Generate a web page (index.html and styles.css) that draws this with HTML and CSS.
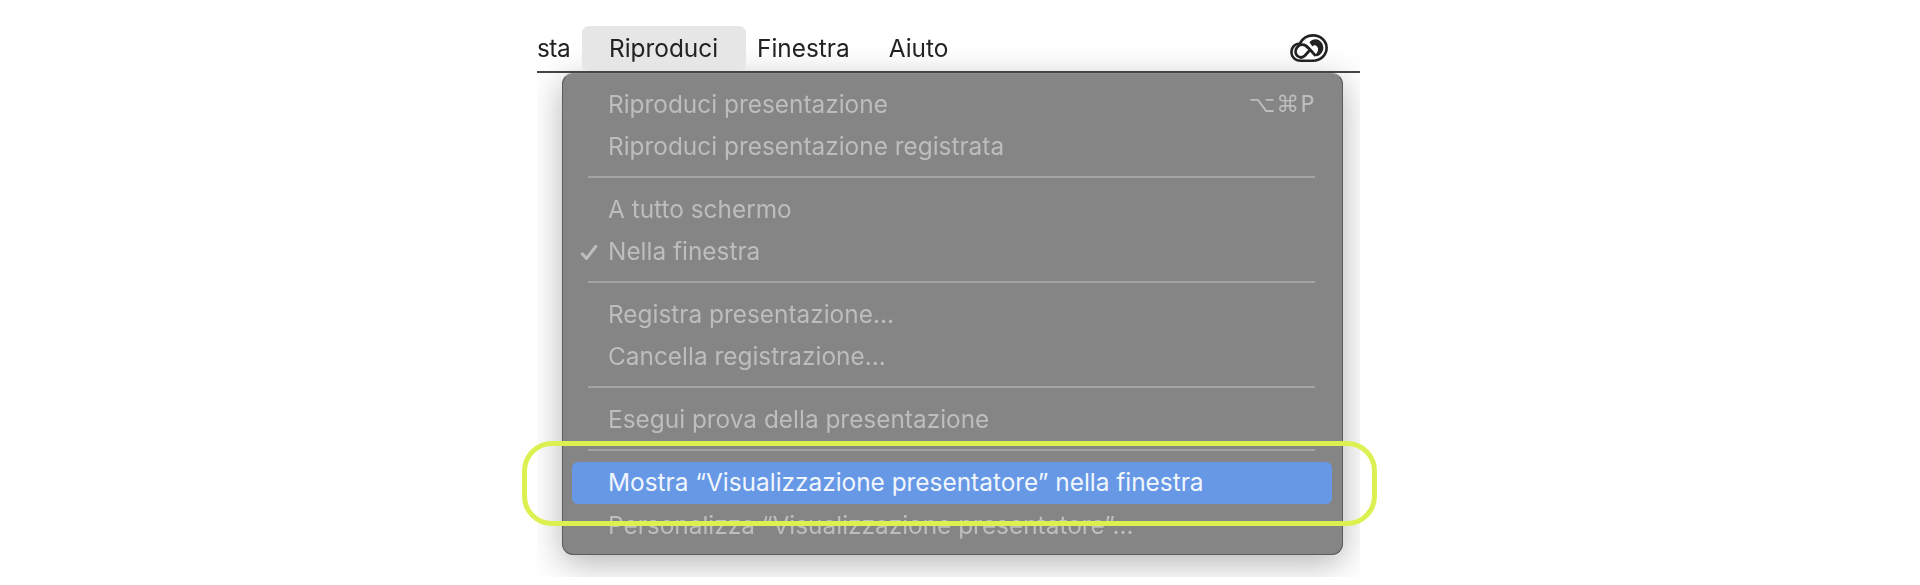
FILE: index.html
```html
<!DOCTYPE html>
<html lang="it">

<head>
    <meta charset="UTF-8">
    <title>Riproduci</title>
    <link rel="stylesheet" href="styles.css">
</head>

<body>
    <div class="stage">
        <div class="shot">
            <div class="menubar">
                <div class="bar-item first">sta</div>
                <div class="bar-item open">Riproduci</div>
                <div class="bar-item">Finestra</div>
                <div class="bar-item">Aiuto</div>
                <svg class="cc-logo" viewBox="0 0 38 28" aria-hidden="true">
                    <path class="cc-outline" d="M10.500 26.700C5 26.700 1.400 22.700 1.400 18C1.400 13 5.500 9.300 10 9.500C12.500 4.500 17.500 1.400 23 1.400C30.500 1.400 36.600 7 36.600 14C36.600 21 30.500 26.700 23 26.700Z" />
                    <path class="cc-fill" d="M19.500 8.500C21 6.300 23.500 5.200 25.800 5.300C30 5.600 33.300 9.300 33.300 13.700C33.300 18.500 29.500 22.300 25.500 22.300L25 21C27 19 28.500 17 28 14.500C27.500 12 25.500 10.500 23.500 11.500L22.500 12.500Z" />
                    <path class="cc-loop" d="M25.500 21.800C23.500 19.500 18.500 13.500 15.500 11.500C12.500 9.700 8.800 11 6.800 13.800C5 16.500 5.300 20 7.500 22C10 24 13 23.500 15 21.500L19.500 16.500" />
                </svg>
            </div>

            <div class="menu">
                <div class="row">
                    <span>Riproduci presentazione</span>
                    <span class="keys">⌥⌘P</span>
                </div>
                <div class="row">Riproduci presentazione registrata</div>
                <div class="sep"></div>
                <div class="row">A tutto schermo</div>
                <div class="row">
                    <svg class="check" viewBox="0 0 18 16" aria-hidden="true">
                        <path d="M1.500 9L6.500 14.500L16.500 1.500" />
                    </svg>
                    <span>Nella finestra</span>
                </div>
                <div class="sep"></div>
                <div class="row">Registra presentazione...</div>
                <div class="row">Cancella registrazione...</div>
                <div class="sep"></div>
                <div class="row">Esegui prova della presentazione</div>
                <div class="sep"></div>
                <div class="row selected">Mostra “Visualizzazione presentatore” nella finestra</div>
                <div class="row">Personalizza “Visualizzazione presentatore”...</div>
            </div>
        </div>

        <div class="ring"></div>
    </div>
</body>

</html>
```

FILE: styles.css
```css
body {
    margin: 0;
    background: #fff;
    font-family: Inter, "Liberation Sans", sans-serif;
}

.stage {
    position: relative;
    width: 823px;
    margin-left: 537px;
    filter: blur(0.4px);
}

.shot {
    height: 577px;
    overflow: hidden;
}

.menubar {
    position: relative;
    z-index: 1;
    display: flex;
    height: 71px;
    border-bottom: 2px solid #444;
    font-size: 24.400px;
    color: #222;
}

.bar-item {
    height: 45px;
    margin-top: 26px;
    margin-right: 39px;
    line-height: 45px;
}

.bar-item.first {
    width: 31px;
    margin-right: 14px;
    letter-spacing: -0.500px;
}

.bar-item.open {
    width: 110px;
    margin-right: 11px;
    padding: 0 27px;
    background: #e6e6e6;
    border-radius: 7px;
}

.cc-logo {
    width: 38px;
    height: 28px;
    margin: 34px 32px 0 auto;
}

.cc-outline {
    fill: #fff;
    stroke: #222;
    stroke-width: 2.600;
}

.cc-fill {
    fill: #222;
}

.cc-loop {
    fill: none;
    stroke: #222;
    stroke-width: 2.800;
}

.menu {
    height: 482px;
    box-sizing: border-box;
    margin: 0 17px 0 25px;
    padding-top: 10px;
    background: #858585;
    border: 1px solid #5c5c5c;
    border-top-color: #8f8f8f;
    border-radius: 11px;
    box-shadow: 0 8px 34px rgba(0, 0, 0, 0.3);
    font-size: 24.400px;
    color: #bdbdbd;
}

.row {
    display: flex;
    justify-content: space-between;
    position: relative;
    height: 42px;
    padding: 0 27px 0 45px;
    line-height: 40px;
    white-space: nowrap;
}

.keys {
    font-family: "DejaVu Sans", sans-serif;
    font-size: 23px;
    letter-spacing: 1px;
}

.check {
    position: absolute;
    left: 17px;
    top: 13px;
    width: 18px;
    height: 16px;
    fill: none;
    stroke: #bdbdbd;
    stroke-width: 3;
}

.sep {
    height: 2px;
    margin: 8px 27px 11px 25px;
    background: #a3a3a3;
}

.selected {
    margin: 0 10px 1px 9px;
    padding-left: 36px;
    background: #6698e6;
    border-radius: 6px;
    color: #f1f6fd;
}

.ring {
    position: absolute;
    left: -15px;
    top: 441px;
    width: 845px;
    height: 75px;
    border: 5px solid #dcf151;
    border-radius: 30px;
}
```
